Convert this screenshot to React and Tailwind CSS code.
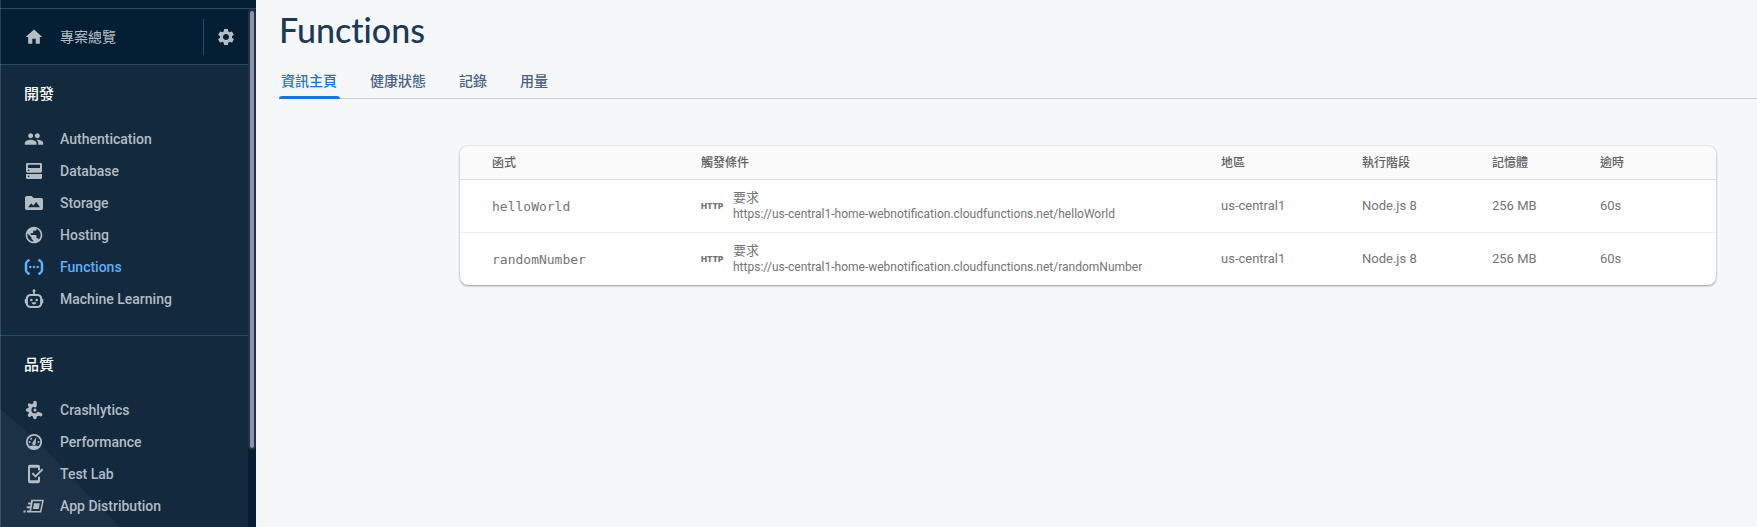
import { MdHome, MdSettings, MdPeople, MdPublic } from "react-icons/md";

function Icon({ children }) {
  return (
    <svg viewBox="0 0 24 24" className="size-5 shrink-0 overflow-visible" fill="currentColor" aria-hidden="true">
      {children}
    </svg>
  );
}

const DatabaseIcon = () => (
  <Icon>
    <path
      fillRule="evenodd"
      d="M4 2.4h16a1.6 1.6 0 0 1 1.6 1.6v8.4A1.6 1.6 0 0 1 20 14H4a1.6 1.6 0 0 1-1.6-1.6V4A1.6 1.6 0 0 1 4 2.4zM4.8 4.6v3.8h14.4V4.6zM5.6 10.2a1 1 0 1 0 0 2 1 1 0 0 0 0-2zM2.4 15.6h19.2V20a1.6 1.6 0 0 1-1.6 1.6H4A1.6 1.6 0 0 1 2.4 20zM5.6 17.4a1 1 0 1 0 0 2 1 1 0 0 0 0-2z"
    />
  </Icon>
);

const StorageIcon = () => (
  <Icon>
    <path
      fillRule="evenodd"
      d="M3.2 3.6h6l2.4 2.4h9.2a2 2 0 0 1 2 2v10.4a2 2 0 0 1-2 2H3.2a2 2 0 0 1-2-2V5.6a2 2 0 0 1 2-2zM4.8 17.2h14.4l-4.6-6.4-3.4 4.4-2.4-3z"
    />
  </Icon>
);

const FunctionsIcon = () => (
  <Icon>
    <g fill="none" stroke="currentColor" strokeWidth="3">
      <path d="M6.6 3.2 4.4 4.8Q2.4 6 2.4 8.4v7.2q0 2.4 2 3.6l2.2 1.6" />
      <path d="M17.4 3.2l2.2 1.6q2 1.2 2 3.6v7.2q0 2.4-2 3.6l-2.2 1.6" />
    </g>
    <circle cx="7.6" cy="12" r="1.5" />
    <circle cx="12" cy="12" r="1.5" />
    <circle cx="16.4" cy="12" r="1.5" />
  </Icon>
);

const RobotIcon = () => (
  <Icon>
    <circle cx="12" cy="2.2" r="1.8" />
    <path d="M11 3h2v4h-2zM.9 12h2.4v5.4H2.1a1.2 1.2 0 0 1-1.2-1.2zM20.7 12h2.4v4.2a1.2 1.2 0 0 1-1.2 1.2h-1.2z" />
    <rect x="3.4" y="7.2" width="17.2" height="14.4" rx="4.6" fill="none" stroke="currentColor" strokeWidth="2.6" />
    <circle cx="8.8" cy="13.2" r="1.5" />
    <circle cx="15.2" cy="13.2" r="1.5" />
    <path d="M9 16h6q-.6 2.6-3 2.6T9 16z" />
  </Icon>
);

const CrashlyticsIcon = () => (
  <Icon>
    <path d="M13.6 5.8A6.2 6.2 0 1 0 17.4 16.4" fill="none" stroke="currentColor" strokeWidth="3.8" />
    <g stroke="currentColor" strokeWidth="4.2" strokeLinecap="round">
      <path d="M13.2 7V3M7.4 6.8l-.8-.8M6.6 12H4.2M7.4 17.4l-.8.8M13 18.4V21M17 16.4l3 1.2" />
    </g>
    <circle cx="13.2" cy="12" r="1.9" />
  </Icon>
);

const PerformanceIcon = () => (
  <Icon>
    <circle cx="12" cy="12" r="8.6" fill="none" stroke="currentColor" strokeWidth="2.2" />
    <path d="M5 17.4q7-2.4 14 0Q16.4 21 12 21t-7-3.6z" />
    <path d="M14.8 6l-.8 7.6a2 2 0 1 1-3.4-1.2z" />
    <circle cx="6.8" cy="12" r="1.2" />
    <circle cx="8.6" cy="8.2" r="1.2" />
    <circle cx="17.4" cy="12" r="1.2" />
  </Icon>
);

const TestLabIcon = () => (
  <Icon>
    <path
      d="M18 7.4V3.6a1.4 1.4 0 0 0-1.4-1.4H7.4A1.4 1.4 0 0 0 6 3.6v16.8a1.4 1.4 0 0 0 1.4 1.4h9.2a1.4 1.4 0 0 0 1.4-1.4v-5"
      fill="none"
      stroke="currentColor"
      strokeWidth="2.4"
    />
    <path d="M5.6 1.6h12.8v3H5.6zM5.6 19.4h12.8v3H5.6z" />
    <path d="M10 11l3.8 3.8 8.6-8.6" fill="none" stroke="currentColor" strokeWidth="2.4" />
  </Icon>
);

const DistributionIcon = () => (
  <Icon>
    <path d="M8.4 5.4h14.4L20 18.8H7.6" fill="none" stroke="currentColor" strokeWidth="1.8" />
    <path d="M12 8.6h7l-1.4 7h-7z" />
    <path d="M8.6 5h2.2L8.4 19H6.2l.8-4.4H3.2v-2.4h4.2l.4-2H5V7.8h3.2zM3.6 17.4h4v2.4h-4zM-.6 17.4h2.6v2.4H-.6z" />
  </Icon>
);

const sections = [
  {
    title: "開發",
    items: [
      { label: "Authentication", icon: <MdPeople className="size-5 shrink-0" /> },
      { label: "Database", icon: <DatabaseIcon /> },
      { label: "Storage", icon: <StorageIcon /> },
      { label: "Hosting", icon: <MdPublic className="size-5 shrink-0" /> },
      { label: "Functions", icon: <FunctionsIcon />, active: true },
      { label: "Machine Learning", icon: <RobotIcon /> },
    ],
  },
  {
    title: "品質",
    items: [
      { label: "Crashlytics", icon: <CrashlyticsIcon /> },
      { label: "Performance", icon: <PerformanceIcon /> },
      { label: "Test Lab", icon: <TestLabIcon /> },
      { label: "App Distribution", icon: <DistributionIcon /> },
    ],
  },
];

const tabs = ["資訊主頁", "健康狀態", "記錄", "用量"];

const functions = [
  { name: "helloWorld", url: "https://us-central1-home-webnotification.cloudfunctions.net/helloWorld" },
  { name: "randomNumber", url: "https://us-central1-home-webnotification.cloudfunctions.net/randomNumber" },
];

function Sidebar() {
  return (
    <aside className="relative flex w-64 shrink-0 overflow-hidden bg-[#041e33]">
      <div className="flex min-w-0 flex-1 flex-col">
        <div className="h-2 shrink-0" />
        <div className="-mr-2 h-px shrink-0 bg-[#27496a]" />
        <div className="flex h-14 shrink-0 items-center border-b border-[#27496a] pl-6 text-[#b4bcc4]">
          <a href="#overview" className="flex flex-1 items-center gap-4 text-sm">
            <MdHome className="size-5" />
            專案總覽
          </a>
          <div className="h-9 w-px bg-[#27496a]" />
          <button type="button" aria-label="Settings" className="flex w-11 justify-center">
            <MdSettings className="size-5" />
          </button>
        </div>
        <nav className="relative flex-1 bg-[#12293e]">
          <svg className="absolute bottom-0 left-0 h-30 w-30" viewBox="0 0 120 120" aria-hidden="true">
            <path d="M0 2Q30 26 60 58T120 120H0z" fill="#1c3146" />
          </svg>
          {sections.map((section) => (
            <section key={section.title} className="relative border-b border-[#27496a] pb-5 last:border-b-0 last:pb-0">
              <h2 className="flex h-[58px] items-start px-6 pt-[19px] text-[15px] leading-5 font-medium text-white">
                {section.title}
              </h2>
              <ul>
                {section.items.map((item) => (
                  <li key={item.label}>
                    <a
                      href="#nav"
                      className={
                        item.active
                          ? "flex h-8 items-center gap-4 px-6 text-sm font-medium text-[#5db1f8]"
                          : "flex h-8 items-center gap-4 px-6 text-sm font-medium text-[#b4bcc4]"
                      }
                    >
                      {item.icon}
                      {item.label}
                    </a>
                  </li>
                ))}
              </ul>
            </section>
          ))}
        </nav>
      </div>
      <div className="w-2 shrink-0 pt-[9px]">
        <div className="h-[441px] rounded-full border-2 border-[#2b303d] bg-[#8496b4]" />
      </div>
      <div className="absolute inset-y-0 left-0 w-px bg-white/15" />
    </aside>
  );
}

function FunctionsTable() {
  const cell = "p-0 text-left";
  return (
    <div className="mt-[47px] mr-[41px] ml-[204px] overflow-hidden rounded-lg bg-white shadow-[0_1px_2px_rgba(0,0,0,0.35),0_0_2px_rgba(0,0,0,0.2)]">
      <table className="w-full table-fixed border-collapse text-[13px] text-[#757575]">
        <colgroup>
          <col className="w-[241px]" />
          <col />
          <col className="w-[141px]" />
          <col className="w-[130px]" />
          <col className="w-[108px]" />
          <col className="w-[116px]" />
        </colgroup>
        <thead>
          <tr className="h-[33px] border-b border-[#dcdcdc] bg-[#fafafa] text-xs text-[#616161]">
            <th className="p-0 pt-0.5 pl-8 text-left font-medium">函式</th>
            {["觸發條件", "地區", "執行階段", "記憶體", "逾時"].map((label) => (
              <th key={label} className="p-0 pt-0.5 text-left font-medium">
                {label}
              </th>
            ))}
          </tr>
        </thead>
        <tbody>
          {functions.map((fn) => (
            <tr key={fn.name} className="h-[53px] border-b border-[#ebebeb] last:border-b-0">
              <td className="p-0 pt-0.5 pl-8 font-['DejaVu_Sans_Mono',monospace]">{fn.name}</td>
              <td className={cell}>
                <div className="flex items-center gap-2">
                  <span className="w-6 font-['Inter',sans-serif] text-[8px] font-black">HTTP</span>
                  <div className="min-w-0">
                    <div className="leading-4">要求</div>
                    <div className="truncate text-xs leading-4">{fn.url}</div>
                  </div>
                </div>
              </td>
              <td className={cell}>us-central1</td>
              <td className={cell}>Node.js 8</td>
              <td className={cell}>256 MB</td>
              <td className={cell}>60s</td>
            </tr>
          ))}
        </tbody>
      </table>
    </div>
  );
}

export default function App() {
  return (
    <div className="flex h-screen overflow-hidden bg-[#f5f7f9] font-['Roboto','Noto_Sans_CJK_TC',sans-serif]">
      <Sidebar />
      <main className="min-w-0 flex-1">
        <h1 className="px-[23px] pt-2.5 pb-px font-['Lato',sans-serif] text-[34px] leading-10 font-medium text-[#1b3a57] [font-variant-ligatures:none]">
          Functions
        </h1>
        <div role="tablist" className="mt-3 ml-[23px] flex gap-7 border-b border-[#c3cbde]">
          {tabs.map((tab, i) => (
            <button
              key={tab}
              type="button"
              role="tab"
              aria-selected={i === 0}
              className={
                i === 0
                  ? "relative h-[35px] pr-[3px] pl-0.5 text-sm font-medium text-[#1273eb] after:absolute after:inset-x-0 after:-bottom-px after:h-[3px] after:rounded-t-[3px] after:bg-[#1273eb]"
                  : "h-[35px] pr-[3px] pl-0.5 text-sm font-medium text-[#476282]"
              }
            >
              {tab}
            </button>
          ))}
        </div>
        <FunctionsTable />
      </main>
    </div>
  );
}
